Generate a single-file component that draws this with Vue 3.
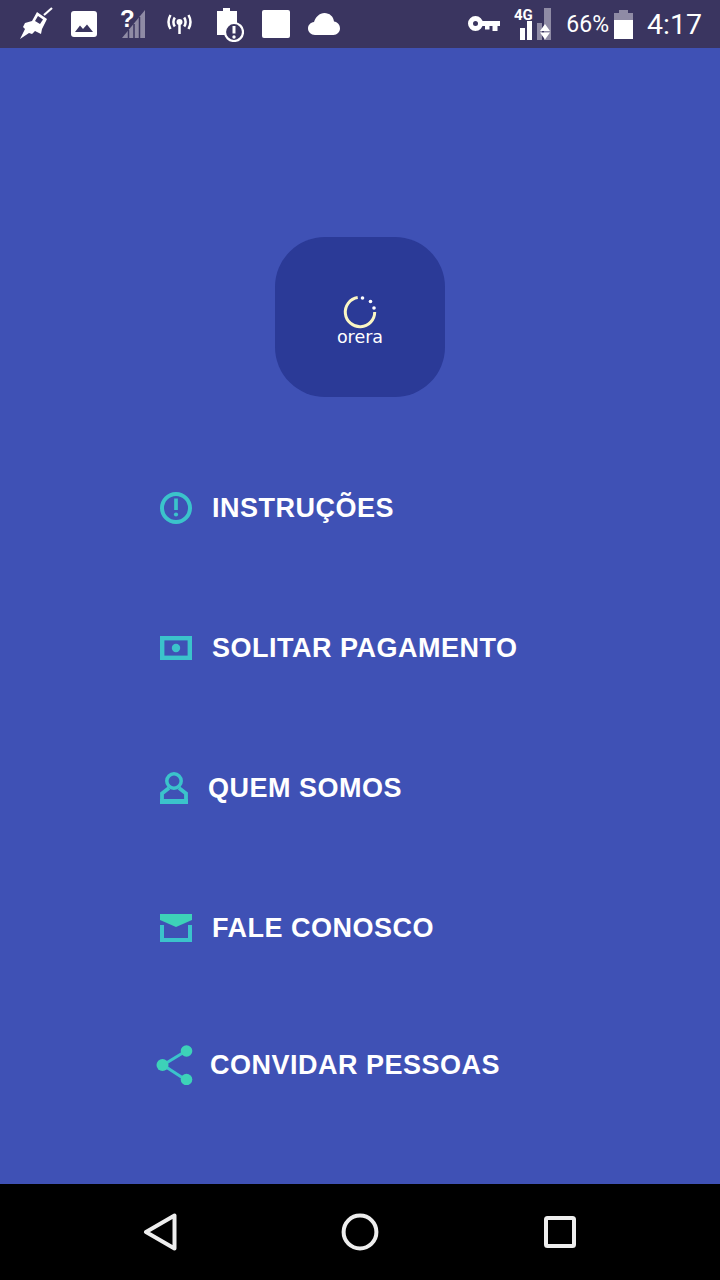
<template>
  <div class="screen">
    <header class="status-bar">
      <div class="status-left">
        <svg class="ic-rocket" width="34" height="34" viewBox="0 0 34 34">
          <path d="M32 1 24 8" stroke="#fff" stroke-width="2.200" fill="none" />
          <path d="M17 5 27 12 22 22 21 27 15 24 12 27 9 26 0 32 5 22 3 20 5 16 12 14Z" fill="#fff" />
          <path d="M18 9 23 12.500 20 17 15 14Z" fill="#3a3560" />
        </svg>
        <svg class="ic-image" width="26" height="26" viewBox="0 0 26 26">
          <rect width="26" height="26" rx="3" fill="#fff" />
          <path d="M4 21 9 14.500 12 18 16 13.500 22 21Z" fill="#3a3560" />
        </svg>
        <svg class="ic-signal" width="26" height="48" viewBox="0 -10 26 48">
          <path d="M25 0V28H2Z" fill="#8f8ba5" />
          <path d="M8.500 28V20M14 28V14M19.500 28V7" stroke="#3a3560" stroke-width="1.500" />
          <text x="0" y="17" class="question">?</text>
        </svg>
        <svg class="ic-antenna" width="25" height="20" viewBox="0 0 25 20">
          <circle cx="12.500" cy="8" r="3" fill="#fff" />
          <path d="M12.500 9V20" stroke="#fff" stroke-width="2.500" />
          <path d="M7.800 3.500Q5 8 7.800 12.500M17.200 3.500Q20 8 17.200 12.500M3.500 1Q-0.500 8 3.500 15M21.500 1Q25.500 8 21.500 15" stroke="#fff" stroke-width="2.500" fill="none" />
        </svg>
        <svg class="ic-alert" width="28" height="36" viewBox="0 0 28 36">
          <path d="M1 5H7V2H14V5H21V20L12 29H1Z" fill="#fff" />
          <circle cx="18" cy="26" r="9" fill="#3a3560" stroke="#fff" stroke-width="2.200" />
          <path d="M18 20V27.500" stroke="#fff" stroke-width="3" />
          <circle cx="18" cy="31" r="1.700" fill="#fff" />
        </svg>
        <div class="ic-square"></div>
        <svg class="ic-cloud" width="32" height="22" viewBox="0 0 32 22">
          <path d="M7 22C3 22 0 19 0 15.500 0 12 2.500 9.500 6 9 7.500 4 11.500 0 16.500 0 21.500 0 25.500 3.500 26 8.500 29.500 9 32 11.500 32 15.500 32 19 29 22 25.500 22Z" fill="#fff" />
        </svg>
      </div>
      <div class="status-right">
        <svg class="ic-key" width="32" height="16" viewBox="0 0 32 16">
          <circle cx="7.500" cy="7.500" r="5" fill="none" stroke="#fff" stroke-width="5" />
          <path d="M13 5H32V10H29.500V15H24.500V10H21.500V13.500H17V10H13Z" fill="#fff" />
        </svg>
        <svg class="ic-net" width="38" height="48" viewBox="0 -8 38 48">
          <text x="0" y="12" class="net-label">4G</text>
          <rect x="6" y="20" width="5" height="12" fill="#fff" />
          <rect x="13" y="13" width="5" height="19" fill="#fff" />
          <rect x="23" y="15" width="5" height="17" fill="#8f8ba5" />
          <rect x="30" y="0" width="7" height="32" fill="#8f8ba5" />
          <path d="M31 16 36 23H26ZM31 31.500 26 24.500H36Z" fill="#fff" />
        </svg>
        <span class="battery-text">66%</span>
        <svg class="ic-battery" width="19" height="29" viewBox="0 0 19 29">
          <path d="M5 0H14V3H19V10H0V3H5Z" fill="#8f8ba5" />
          <rect y="10" width="19" height="19" fill="#fff" />
        </svg>
        <span class="clock">4:17</span>
      </div>
    </header>

    <main class="content">
      <div class="logo">
        <svg width="34" height="36" viewBox="0 0 34 36">
          <path d="M14.700 3.500A14.700 14.700 0 1 0 31.700 18" fill="none" stroke="#fbf6c4" stroke-width="3" />
          <circle cx="19.500" cy="4" r="1.800" fill="#fff" />
          <circle cx="27.500" cy="7.500" r="1.800" fill="#fff" />
          <circle cx="31" cy="14" r="1.800" fill="#fff" />
        </svg>
        <span class="logo-name">orera</span>
      </div>

      <nav class="menu">
        <a class="menu-item">
          <svg width="32" height="32" viewBox="0 0 32 32">
            <circle cx="16" cy="16" r="14" fill="none" stroke="#3bc3cb" stroke-width="4" />
            <path d="M16 6.500V18" stroke="#3bc3cb" stroke-width="3.700" />
            <circle cx="16" cy="22.500" r="2.100" fill="#3bc3cb" />
          </svg>
          <span>INSTRUÇÕES</span>
        </a>
        <a class="menu-item">
          <svg width="32" height="24" viewBox="0 0 32 24">
            <rect x="2.200" y="2.200" width="27.600" height="19.600" fill="none" stroke="#3bc3cb" stroke-width="4.400" />
            <circle cx="16" cy="12" r="4.200" fill="#3bc3cb" />
          </svg>
          <span>SOLITAR PAGAMENTO</span>
        </a>
        <a class="menu-item">
          <svg width="28" height="32" viewBox="0 0 28 32">
            <circle cx="14" cy="9" r="7.200" fill="none" stroke="#3bc3cb" stroke-width="3.500" />
            <path d="M9 16 2 21.500V30H26V21.500L19 16" fill="none" stroke="#3bc3cb" stroke-width="3.800" />
            <path d="M0 27H28V32H0Z" fill="#3bc3cb" />
          </svg>
          <span>QUEM SOMOS</span>
        </a>
        <a class="menu-item">
          <svg width="32" height="28" viewBox="0 0 32 28">
            <path d="M0 0H32V6L16 13 0 6Z" fill="#3dd2b8" />
            <path d="M2 11V26H30V11" fill="none" stroke="#3bc3cb" stroke-width="4" />
          </svg>
          <span>FALE CONOSCO</span>
        </a>
        <a class="menu-item share">
          <svg width="37" height="40" viewBox="0 0 37 40">
            <path d="M30 6 7 20 30 35" fill="none" stroke="#3bc3cb" stroke-width="3" />
            <circle cx="30.500" cy="6" r="5.800" fill="#3dd2b8" />
            <circle cx="6.500" cy="20" r="6" fill="#3dd2b8" />
            <circle cx="30.500" cy="34.500" r="5.800" fill="#3dd2b8" />
          </svg>
          <span>CONVIDAR PESSOAS</span>
        </a>
      </nav>
    </main>

    <footer class="nav-bar">
      <svg width="34" height="38" viewBox="0 0 34 38">
        <path d="M31.500 2.500V35.500L3 19Z" fill="none" stroke="#eee" stroke-width="4" stroke-linejoin="round" />
      </svg>
      <svg width="38" height="38" viewBox="0 0 38 38">
        <circle cx="19" cy="19" r="16.400" fill="none" stroke="#eee" stroke-width="4" />
      </svg>
      <svg width="34" height="34" viewBox="0 0 34 34">
        <rect x="3" y="3" width="28" height="28" rx="1.500" fill="none" stroke="#eee" stroke-width="4" />
      </svg>
    </footer>
  </div>
</template>

<script setup>
</script>

<style>
html,
body {
  margin: 0;
  background: #3f51b5;
}
</style>

<style scoped>
.screen {
  display: flex;
  flex-direction: column;
  width: 720px;
  height: 1280px;
  overflow: hidden;
  font-family: "Liberation Sans", Arial, sans-serif;
}

.status-bar {
  display: flex;
  align-items: center;
  justify-content: space-between;
  height: 48px;
  background: #3a3560;
  color: #fff;
  flex-shrink: 0;
}

.status-left,
.status-right {
  display: flex;
  align-items: center;
}

.status-left {
  padding-left: 20px;
}

.status-right {
  padding-right: 18px;
}

.ic-image {
  margin-left: 17px;
}

.ic-signal {
  margin-left: 23px;
}

.ic-antenna {
  margin-left: 21px;
}

.ic-alert {
  margin-left: 24px;
}

.ic-square {
  width: 28px;
  height: 28px;
  margin-left: 18px;
  border-radius: 2px;
  background: #fff;
}

.ic-cloud {
  margin-left: 18px;
}

.question {
  font-family: "Liberation Sans", sans-serif;
  font-weight: 700;
  font-size: 24px;
  fill: #fff;
}

.net-label {
  font-family: "Roboto", sans-serif;
  font-weight: 700;
  font-size: 15px;
  fill: #fff;
}

.ic-net {
  margin-left: 14px;
}

.battery-text {
  margin-left: 14px;
  font-family: "Roboto", sans-serif;
  font-size: 23px;
}

.ic-battery {
  margin-left: 5px;
}

.clock {
  margin-left: 14px;
  font-family: "Roboto", sans-serif;
  font-size: 28.500px;
}

.content {
  flex: 1;
  background: #3f51b5;
}

.logo {
  display: flex;
  flex-direction: column;
  align-items: center;
  justify-content: center;
  box-sizing: border-box;
  width: 170px;
  height: 160px;
  margin: 189px auto 0;
  padding-top: 4px;
  border-radius: 50px;
  background: #2b3a97;
  color: #fff;
}

.logo-name {
  margin-top: -1px;
  font-family: "DejaVu Sans", sans-serif;
  font-size: 17.500px;
  line-height: 16px;
}

.menu {
  display: flex;
  flex-direction: column;
  gap: 80px;
  margin-top: 81px;
  padding-left: 160px;
}

.menu-item {
  display: flex;
  align-items: center;
  gap: 20px;
  height: 60px;
  color: #fff;
  font-size: 27px;
  font-weight: 700;
  letter-spacing: 0.5px;
}

.menu-item.share {
  gap: 17px;
  margin-top: -3px;
  margin-left: -4px;
}

.nav-bar {
  display: flex;
  align-items: center;
  justify-content: space-between;
  height: 96px;
  padding: 0 143px;
  background: #000;
  flex-shrink: 0;
}
</style>
